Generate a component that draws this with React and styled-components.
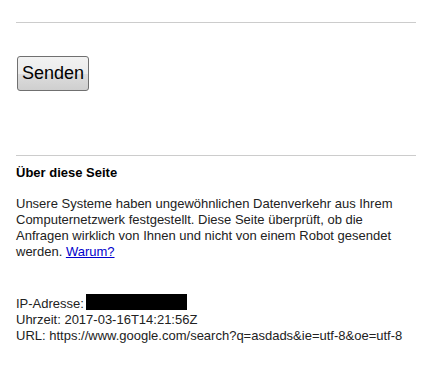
import React from 'react';
import styled, { createGlobalStyle } from 'styled-components';

const GlobalStyle = createGlobalStyle`
  html, body {
    margin: 0;
    padding: 0;
    background: #fff;
  }
  body {
    font-family: 'Liberation Sans', Arial, sans-serif;
    color: #222;
  }
`;

// Seite
const Page = styled.div`
  width: 400px;
  padding: 22px 16px 0;
`;

const Divider = styled.hr`
  margin: 0;
  border: 0;
  border-top: 1px solid #ccc;
  height: 0;
`;

const Form = styled.form`
  padding: 33px 0 64px;
`;

const SubmitButton = styled.button`
  display: block;
  width: 72px;
  height: 35px;
  padding: 0;
  font-family: 'Liberation Sans', Arial, sans-serif;
  font-size: 18px;
  color: #000;
  background: linear-gradient(#f2f2f2, #ebebeb 50%, #dddddd 51%, #cfcfcf);
  border: 1px solid #707070;
  border-radius: 3px;
  margin-left: 1px;
  cursor: pointer;
`;

const Info = styled.div`
  font-size: 13px;
  line-height: 16px;
  padding-top: 9px;
`;

const Heading = styled.b`
  display: block;
  font-weight: bold;
  color: #000;
`;

const Text = styled.p`
  margin: 15px 0 0;
`;

const Link = styled.a`
  color: #00c;
  text-decoration: underline;
`;

const Details = styled.div`
  margin-top: 34px;
`;

const Redacted = styled.span`
  display: inline-block;
  width: 101px;
  height: 16px;
  margin-left: 2px;
  background: #000;
  vertical-align: -2px;
`;

const App = () => {
  return (
    <>
      <GlobalStyle />
      <Page>
        <Divider />
        <Form onSubmit={(e) => e.preventDefault()}>
          <SubmitButton type="submit">Senden</SubmitButton>
        </Form>
        <Divider />
        <Info>
          <Heading>Über diese Seite</Heading>
          <Text>
            Unsere Systeme haben ungewöhnlichen Datenverkehr aus Ihrem
            Computernetzwerk festgestellt. Diese Seite überprüft, ob die
            Anfragen wirklich von Ihnen und nicht von einem Robot gesendet
            werden. <Link href="#">Warum?</Link>
          </Text>
          <Details>
            IP-Adresse:<Redacted />
            <br />
            Uhrzeit: 2017-03-16T14:21:56Z
            <br />
            URL: https://www.google.com/search?q=asdads&amp;ie=utf-8&amp;oe=utf-8
          </Details>
        </Info>
      </Page>
    </>
  );
};

export default App;
